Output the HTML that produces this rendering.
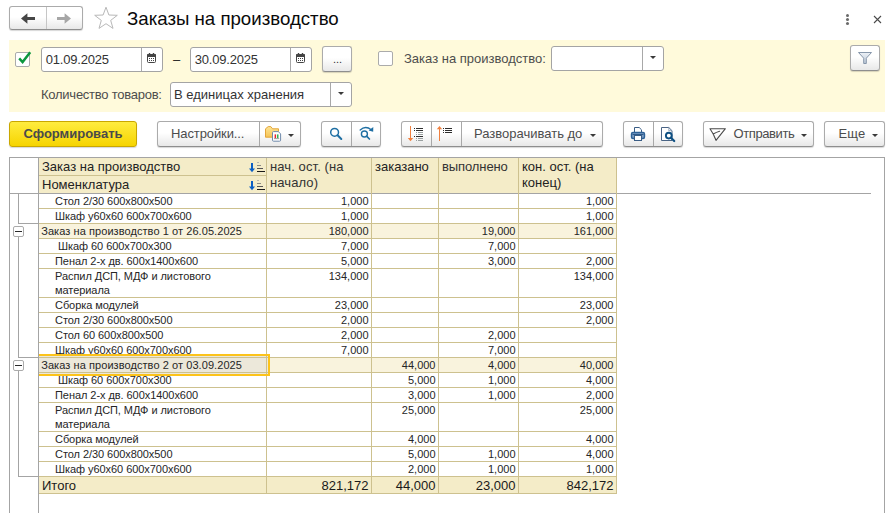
<!DOCTYPE html>
<html lang="ru"><head><meta charset="utf-8"><title>Заказы на производство</title>
<style>
*{box-sizing:border-box;margin:0;padding:0}
html,body{width:895px;height:513px;overflow:hidden;background:#fff}
body{font-family:"Liberation Sans",Arial,sans-serif;font-size:13px;color:#333;position:relative}
.abs{position:absolute}
.btn{position:absolute;height:25px;border:1px solid #ababab;border-bottom-color:#8e8e8e;border-radius:3px;background:linear-gradient(#ffffff 45%,#e8e8e8);box-shadow:0 1px 1px rgba(0,0,0,.16);font-size:13px;color:#4c4c4c;line-height:23px;white-space:nowrap}
.inp{position:absolute;height:25px;border:1px solid #a4a4a4;border-radius:3px;background:#fff;font-size:13px;color:#333;line-height:23px;white-space:nowrap}
.inp .sep{position:absolute;top:0;bottom:0;width:1px;background:#a8a8a8}
.cal{position:absolute;left:105px;top:5px}
.dt{letter-spacing:-0.2px}
.lbl{position:absolute;font-size:13px;color:#4d4d4d;white-space:nowrap;line-height:16px}
.tri{position:absolute;width:0;height:0;border-left:3px solid transparent;border-right:3px solid transparent;border-top:3px solid #3a3a3a}
.cb{position:absolute;width:15px;height:15px;border:1px solid #ababab;border-radius:2px;background:#fff}
/* table */
#tbl{position:absolute;left:0;top:0;width:895px;height:513px;pointer-events:none}
.r{position:absolute;left:39px;width:577px;overflow:visible}
.r .n{z-index:3;position:absolute;top:0;font-size:11px;line-height:14px;color:#262626;white-space:nowrap}
.r.i2 .n{line-height:14px}
.r.g .n{letter-spacing:0.07px}
.r.i .n,.r.i2 .n{letter-spacing:-0.06px}
.r .v{z-index:3;position:absolute;top:0;font-size:11px;line-height:14px;color:#262626;white-space:nowrap}
.r.t .n,.r.t .v{font-size:13px;line-height:16px;color:#1a1a1a;top:1px}
.hl{z-index:2;position:absolute;left:39px;width:578px;height:1px;background:#cdc18f}
.vl{z-index:2;position:absolute;width:1px;background:#cdc18f}
.gl{position:absolute;background:#a4a4a4}
</style></head><body>

<!-- title bar -->
<div class="btn" style="left:9px;top:6px;width:74px;height:24px"></div>
<div class="abs" style="left:46px;top:7px;width:1px;height:22px;background:#c6c6c6"></div>
<svg class="abs" style="left:9px;top:6px" width="74" height="24" viewBox="0 0 74 24">
 <path d="M12 12.5 L18.4 7.3 V11 H26 V14 H18.4 V17.7 Z" fill="#464646"/>
 <path d="M62 12.5 L55.6 7.3 V11 H48 V14 H55.6 V17.7 Z" fill="#a6a6a6"/>
</svg>
<svg class="abs" style="left:92.7px;top:5px" width="26" height="25" viewBox="0 0 26 25">
 <path d="M13 2.2 L15.9 10 L24.3 10.3 L17.7 15.4 L20 23.4 L13 18.7 L6 23.4 L8.3 15.4 L1.7 10.3 L10.1 10 Z" fill="#fff" stroke="#b8b8b8" stroke-width="1"/>
</svg>
<div class="abs" style="left:127px;top:7px;font-size:18.67px;line-height:24px;color:#0a0a0a;white-space:nowrap">Заказы на производство</div>
<!-- kebab + close -->
<div class="abs" style="left:846px;top:14px;width:3px;height:3px;border-radius:50%;background:#6a6a6a;box-shadow:0 4px 0 #6a6a6a,0 8px 0 #6a6a6a"></div>
<svg class="abs" style="left:873px;top:15px" width="9" height="9" viewBox="0 0 9 9"><path d="M1 1 L8 8 M8 1 L1 8" stroke="#4a4a4a" stroke-width="1.1" fill="none"/></svg>

<!-- yellow panel -->
<div class="abs" style="left:9px;top:40px;width:876px;height:72px;background:#fffadb"></div>
<div class="cb" style="left:15px;top:52px"></div>
<svg class="abs" style="left:16px;top:48.5px" width="18" height="16" viewBox="0 0 18 16"><path d="M3.2 9.3 L6.6 13 L14.2 3.3" stroke="#0c973e" stroke-width="2.5" fill="none"/></svg>
<div class="inp" style="left:41px;top:47px;width:122px"><span class="dt" style="position:absolute;left:3.7px">01.09.2025</span><span class="sep" style="left:99px"></span><svg class="cal" width="9" height="10" viewBox="0 0 9 10"><g shape-rendering="crispEdges">
  <rect x="0.5" y="1.5" width="8" height="8" rx="1" fill="#fff" stroke="#444" stroke-width="1" shape-rendering="auto"/>
  <rect x="0" y="1.2" width="9" height="2.8" fill="#444" shape-rendering="auto"/>
  <rect x="1.8" y="0" width="1.4" height="1.6" fill="#444" shape-rendering="auto"/><rect x="5.8" y="0" width="1.4" height="1.6" fill="#444" shape-rendering="auto"/>
  <rect x="2" y="5" width="1" height="1" fill="#444"/><rect x="4" y="5" width="1" height="1" fill="#444"/><rect x="6" y="5" width="1" height="1" fill="#444"/>
  <rect x="2" y="7" width="1" height="1" fill="#444"/><rect x="4" y="7" width="1" height="1" fill="#444"/><rect x="6" y="7" width="1" height="1" fill="#444"/>
 </g></svg></div>
<div class="lbl" style="left:173px;top:52px;color:#222">–</div>
<div class="inp" style="left:190px;top:47px;width:122px"><span class="dt" style="position:absolute;left:3.7px">30.09.2025</span><span class="sep" style="left:99px"></span><svg class="cal" width="9" height="10" viewBox="0 0 9 10"><g shape-rendering="crispEdges">
  <rect x="0.5" y="1.5" width="8" height="8" rx="1" fill="#fff" stroke="#444" stroke-width="1" shape-rendering="auto"/>
  <rect x="0" y="1.2" width="9" height="2.8" fill="#444" shape-rendering="auto"/>
  <rect x="1.8" y="0" width="1.4" height="1.6" fill="#444" shape-rendering="auto"/><rect x="5.8" y="0" width="1.4" height="1.6" fill="#444" shape-rendering="auto"/>
  <rect x="2" y="5" width="1" height="1" fill="#444"/><rect x="4" y="5" width="1" height="1" fill="#444"/><rect x="6" y="5" width="1" height="1" fill="#444"/>
  <rect x="2" y="7" width="1" height="1" fill="#444"/><rect x="4" y="7" width="1" height="1" fill="#444"/><rect x="6" y="7" width="1" height="1" fill="#444"/>
 </g></svg></div>
<div class="btn" style="left:322px;top:46px;width:30px;height:26px;text-align:center;color:#333;font-size:11px;line-height:24px;padding-left:1px">...</div>
<div class="cb" style="left:378px;top:51px"></div>
<div class="lbl" style="left:404px;top:51px">Заказ на производство:</div>
<div class="inp" style="left:551px;top:46px;width:113px"><span class="sep" style="left:90px"></span></div>
<div class="tri" style="left:650px;top:56px"></div>
<div class="btn" style="left:850px;top:45px;width:30px;height:26px"></div>
<svg class="abs" style="left:857px;top:51px" width="16" height="14" viewBox="0 0 16 14">
 <defs><linearGradient id="fg" x1="0" y1="0" x2="0" y2="1"><stop offset="0" stop-color="#eef2f7"/><stop offset="1" stop-color="#b9c6d6"/></linearGradient></defs>
 <path d="M1.5 1.5 H14.5 L9.3 7.2 V12.5 H6.7 V7.2 Z" fill="url(#fg)" stroke="#8797ab" stroke-width="1" stroke-linejoin="round"/>
</svg>
<div class="lbl" style="left:41px;top:87px;letter-spacing:-0.25px">Количество товаров:</div>
<div class="inp" style="left:170px;top:82px;width:182px"><span style="position:absolute;left:3px">В единицах хранения</span><span class="sep" style="left:159px"></span></div>
<div class="tri" style="left:338px;top:92px"></div>

<!-- toolbar -->
<div class="btn" style="left:9px;top:121px;width:128px;height:26px;background:linear-gradient(#ffec3f,#f6d400);border-color:#c9a700;font-weight:bold;color:#4a4a4a;text-align:center;line-height:24px">Сформировать</div>
<div class="btn" style="left:157px;top:121px;width:144px;height:26px"></div>
<div class="lbl" style="left:171px;top:126px;color:#4c4c4c;letter-spacing:-0.1px">Настройки...</div>
<div class="abs" style="left:259px;top:122px;width:1px;height:24px;background:#a8a8a8"></div>
<svg class="abs" style="left:264px;top:125px" width="19" height="18" viewBox="0 0 19 18">
 <defs><linearGradient id="fo" x1="0" y1="0" x2="0" y2="1"><stop offset="0" stop-color="#fde596"/><stop offset="1" stop-color="#f6c455"/></linearGradient></defs>
 <path d="M1.5 12.2 V3.8 L4.2 1.6 H6.8 L8.6 3.8 H14.5 V12.2 Z" fill="url(#fo)" stroke="#e3a53a" stroke-width="1" stroke-linejoin="round"/>
 <path d="M8.5 7.6 Q8.5 6.6 9.5 6.6 H14.3 L16.6 8.9 V15.2 Q16.6 16.2 15.6 16.2 H9.5 Q8.5 16.2 8.5 15.2 Z" fill="#fff" stroke="#6f89aa" stroke-width="1"/>
 <rect x="10.6" y="9.4" width="1.5" height="3.8" fill="#e8252b"/>
 <rect x="13" y="9.4" width="1.5" height="3.8" fill="#2fb457"/>
 <rect x="10" y="13.3" width="5.2" height="0.8" fill="#8a8a8a"/>
</svg>
<div class="tri" style="left:288px;top:134px"></div>
<div class="btn" style="left:321px;top:121px;width:60px;height:26px"></div>
<div class="abs" style="left:351px;top:122px;width:1px;height:24px;background:#a8a8a8"></div>
<svg class="abs" style="left:321px;top:121px" width="60" height="26" viewBox="0 0 60 26">
 <g fill="none" stroke="#1f6fa3" stroke-linecap="round">
  <circle cx="13.6" cy="11.3" r="3.9" stroke-width="1.5"/>
  <path d="M16.6 14.3 L20.3 18" stroke-width="2"/>
  <circle cx="43.4" cy="13" r="3" stroke-width="1.4"/>
  <path d="M45.6 15.2 L48.4 18" stroke-width="1.7"/>
  <path d="M39.2 9 Q44.5 4.2 50.2 8.8" stroke-width="1.4"/>
 </g>
 <path d="M52.3 6 L52.2 10.8 L47.6 9.6 Z" fill="#1f6fa3"/>
</svg>
<div class="btn" style="left:401px;top:121px;width:202px;height:26px"></div>
<div class="abs" style="left:431px;top:122px;width:1px;height:24px;background:#a8a8a8"></div>
<div class="abs" style="left:461px;top:122px;width:1px;height:24px;background:#a8a8a8"></div>
<svg class="abs" style="left:401px;top:121px" width="60" height="26" viewBox="0 0 60 26" shape-rendering="crispEdges">
 <g fill="#f0803f">
  <rect x="9" y="5" width="1" height="13"/><path d="M6.8 17 H12.2 L9.5 20.2 Z" shape-rendering="auto"/>
  <rect x="38" y="7" width="1" height="13"/><path d="M35.8 8.2 H41.2 L38.5 5 Z" shape-rendering="auto"/>
 </g>
 <g fill="#2e2e2e">
  <rect x="13" y="7" width="1" height="1"/><rect x="15" y="7" width="7" height="1"/>
  <rect x="13" y="9" width="1" height="1"/><rect x="15" y="9" width="7" height="1"/>
  <rect x="13" y="15" width="1" height="1"/><rect x="15" y="15" width="7" height="1"/>
  <rect x="42" y="7" width="1" height="1"/><rect x="44" y="7" width="7" height="1"/>
  <rect x="42" y="9" width="1" height="1"/><rect x="44" y="9" width="7" height="1"/>
  <rect x="42" y="11" width="1" height="1"/><rect x="44" y="11" width="7" height="1"/>
 </g>
 <g fill="#9aa0a0">
  <rect x="15" y="11" width="1" height="1"/><rect x="17" y="11" width="5" height="1"/>
  <rect x="15" y="13" width="1" height="1"/><rect x="17" y="13" width="5" height="1"/>
  <rect x="15" y="17" width="1" height="1"/><rect x="17" y="17" width="5" height="1"/>
  <rect x="15" y="19" width="1" height="1"/><rect x="17" y="19" width="5" height="1"/>
 </g>
</svg>
<div class="lbl" style="left:474px;top:126px;color:#4c4c4c">Разворачивать до</div>
<div class="tri" style="left:590px;top:134px"></div>
<div class="btn" style="left:623px;top:121px;width:60px;height:26px"></div>
<div class="abs" style="left:653px;top:122px;width:1px;height:24px;background:#a8a8a8"></div>
<svg class="abs" style="left:623px;top:121px" width="60" height="26" viewBox="0 0 60 26">
 <path d="M11.5 11 V6.5 H16.2 L18.5 8.8 V11" fill="#fff" stroke="#3a5d85" stroke-width="1"/>
 <rect x="8.5" y="11.5" width="13" height="6" rx="1.5" fill="#7a9cc4" stroke="#2d6196" stroke-width="1.4"/>
 <rect x="9.5" y="13" width="11" height="1" fill="#2d5a8a"/>
 <rect x="11.5" y="14.5" width="7" height="5" fill="#fff" stroke="#3a5d85" stroke-width="1"/>
 <path d="M38.5 6.5 H45.8 L49 9.7 V19.5 H38.5 Z" fill="#fff" stroke="#4a6485" stroke-width="1"/>
 <path d="M45.8 6.5 V9.7 H49" fill="none" stroke="#7d93ad" stroke-width="0.8"/>
 <circle cx="45.8" cy="14.6" r="2.9" fill="#fff" stroke="#0d4f82" stroke-width="1.9"/>
 <path d="M48 16.8 L51.2 20" stroke="#0d4f82" stroke-width="2.2" stroke-linecap="round"/>
</svg>
<div class="btn" style="left:703px;top:121px;width:111px;height:26px"></div>
<svg class="abs" style="left:708px;top:126px" width="20" height="17" viewBox="0 0 20 17">
 <path d="M2 2.7 H17.4 L8 14.3 L5.2 8 Z M5.2 8 Q8.5 6 11.6 5.2" fill="none" stroke="#4a4a4a" stroke-width="1.1" stroke-linejoin="round" stroke-linecap="round"/>
</svg>
<div class="lbl" style="left:733.5px;top:126px;color:#4c4c4c;letter-spacing:-0.4px">Отправить</div>
<div class="tri" style="left:801px;top:134px"></div>
<div class="btn" style="left:824px;top:121px;width:61px;height:26px"></div>
<div class="lbl" style="left:838.5px;top:126px;color:#4c4c4c;letter-spacing:0.2px">Еще</div>
<div class="tri" style="left:872px;top:134px"></div>

<!-- table -->
<div id="tbl">
 <!-- outer grey borders -->
 <div class="gl" style="left:9px;top:157px;width:876px;height:1px"></div>
 <div class="gl" style="left:9px;top:157px;width:1px;height:356px"></div>
 <div class="gl" style="left:884px;top:157px;width:1px;height:356px"></div>
 <div class="gl" style="left:38px;top:157px;width:1px;height:356px"></div>
 <div class="gl" style="left:10px;top:193px;width:861px;height:1px"></div>
 <!-- header -->
 <div class="abs" style="left:39px;top:158px;width:577px;height:35px;background:#f4ecc8"></div>
 <div class="hl" style="top:175px;width:227px"></div>
<svg class="abs" style="left:248px;top:161px" width="18" height="12" viewBox="0 0 18 12" shape-rendering="crispEdges">
  <rect x="3" y="2" width="2" height="7" fill="#0b5fc4"/><path d="M1 7.4 H7 L4 11.2 Z" fill="#0b5fc4" shape-rendering="auto"/>
  <rect x="9" y="1" width="2" height="1" fill="#b8b8b0"/><rect x="9" y="4" width="4" height="1" fill="#8c8c86"/><rect x="9" y="7" width="6" height="1" fill="#555"/><rect x="9" y="10" width="8" height="1" fill="#1a1a1a"/>
 </svg>
<svg class="abs" style="left:248px;top:179px" width="18" height="12" viewBox="0 0 18 12" shape-rendering="crispEdges">
  <rect x="3" y="2" width="2" height="7" fill="#0b5fc4"/><path d="M1 7.4 H7 L4 11.2 Z" fill="#0b5fc4" shape-rendering="auto"/>
  <rect x="9" y="1" width="2" height="1" fill="#b8b8b0"/><rect x="9" y="4" width="4" height="1" fill="#8c8c86"/><rect x="9" y="7" width="6" height="1" fill="#555"/><rect x="9" y="10" width="8" height="1" fill="#1a1a1a"/>
 </svg>
 <div class="lbl" style="left:42px;top:159px;color:#222">Заказ на производство</div>
 <div class="lbl" style="left:42px;top:177px;color:#222">Номенклатура</div>
 <div class="lbl" style="left:270px;top:159px;color:#333;letter-spacing:0.1px">нач. ост. (на<br>начало)</div>
 <div class="lbl" style="left:375px;top:159px;color:#222">заказано</div>
 <div class="lbl" style="left:442px;top:159px;color:#333;letter-spacing:-0.1px">выполнено</div>
 <div class="lbl" style="left:522px;top:159px;color:#222">кон. ост. (на<br>конец)</div>
 <div class="abs" style="left:39px;top:356px;width:229px;height:18px;background:#ece8da;z-index:1"></div>
<div class="r i" style="top:194px;height:14px;background:#fff">
<span class="n" style="left:16px">Стол 2/30 600х800х500</span>
<span class="v" style="right:247.5px">1,000</span>
<span class="v" style="right:2.5px">1,000</span>
</div>
<div class="hl" style="top:208px"></div>
<div class="r i" style="top:209px;height:14px;background:#fff">
<span class="n" style="left:16px">Шкаф у60х60 600х700х600</span>
<span class="v" style="right:247.5px">1,000</span>
<span class="v" style="right:2.5px">1,000</span>
</div>
<div class="hl" style="top:223px"></div>
<div class="r g" style="top:224px;height:14px;background:#f9f3dd">
<span class="n" style="left:2.200000000000003px">Заказ на производство 1 от 26.05.2025</span>
<span class="v" style="right:247.5px">180,000</span>
<span class="v" style="right:100.5px">19,000</span>
<span class="v" style="right:2.5px">161,000</span>
</div>
<div class="hl" style="top:238px"></div>
<div class="r i" style="top:239px;height:14px;background:#fff">
<span class="n" style="left:19px">Шкаф 60 600х700х300</span>
<span class="v" style="right:247.5px">7,000</span>
<span class="v" style="right:100.5px">7,000</span>
</div>
<div class="hl" style="top:253px"></div>
<div class="r i" style="top:254px;height:14px;background:#fff">
<span class="n" style="left:16px">Пенал 2-х дв. 600х1400х600</span>
<span class="v" style="right:247.5px">5,000</span>
<span class="v" style="right:100.5px">3,000</span>
<span class="v" style="right:2.5px">2,000</span>
</div>
<div class="hl" style="top:268px"></div>
<div class="r i2" style="top:269px;height:28px;background:#fff">
<span class="n" style="left:16px">Распил ДСП, МДФ и листового<br>материала</span>
<span class="v" style="right:247.5px">134,000</span>
<span class="v" style="right:2.5px">134,000</span>
</div>
<div class="hl" style="top:297px"></div>
<div class="r i" style="top:298px;height:14px;background:#fff">
<span class="n" style="left:16px">Сборка модулей</span>
<span class="v" style="right:247.5px">23,000</span>
<span class="v" style="right:2.5px">23,000</span>
</div>
<div class="hl" style="top:312px"></div>
<div class="r i" style="top:313px;height:14px;background:#fff">
<span class="n" style="left:16px">Стол 2/30 600х800х500</span>
<span class="v" style="right:247.5px">2,000</span>
<span class="v" style="right:2.5px">2,000</span>
</div>
<div class="hl" style="top:327px"></div>
<div class="r i" style="top:328px;height:14px;background:#fff">
<span class="n" style="left:16px">Стол 60 600х800х500</span>
<span class="v" style="right:247.5px">2,000</span>
<span class="v" style="right:100.5px">2,000</span>
</div>
<div class="hl" style="top:342px"></div>
<div class="r i" style="top:343px;height:14px;background:#fff">
<span class="n" style="left:16px">Шкаф у60х60 600х700х600</span>
<span class="v" style="right:247.5px">7,000</span>
<span class="v" style="right:100.5px">7,000</span>
</div>
<div class="hl" style="top:357px"></div>
<div class="r g" style="top:358px;height:14px;background:#f9f3dd">
<span class="n" style="left:2.200000000000003px">Заказ на производство 2 от 03.09.2025</span>
<span class="v" style="right:180.5px">44,000</span>
<span class="v" style="right:100.5px">4,000</span>
<span class="v" style="right:2.5px">40,000</span>
</div>
<div class="hl" style="top:372px"></div>
<div class="r i" style="top:373px;height:14px;background:#fff">
<span class="n" style="left:19px">Шкаф 60 600х700х300</span>
<span class="v" style="right:180.5px">5,000</span>
<span class="v" style="right:100.5px">1,000</span>
<span class="v" style="right:2.5px">4,000</span>
</div>
<div class="hl" style="top:387px"></div>
<div class="r i" style="top:388px;height:14px;background:#fff">
<span class="n" style="left:16px">Пенал 2-х дв. 600х1400х600</span>
<span class="v" style="right:180.5px">3,000</span>
<span class="v" style="right:100.5px">1,000</span>
<span class="v" style="right:2.5px">2,000</span>
</div>
<div class="hl" style="top:402px"></div>
<div class="r i2" style="top:403px;height:28px;background:#fff">
<span class="n" style="left:16px">Распил ДСП, МДФ и листового<br>материала</span>
<span class="v" style="right:180.5px">25,000</span>
<span class="v" style="right:2.5px">25,000</span>
</div>
<div class="hl" style="top:431px"></div>
<div class="r i" style="top:432px;height:14px;background:#fff">
<span class="n" style="left:16px">Сборка модулей</span>
<span class="v" style="right:180.5px">4,000</span>
<span class="v" style="right:2.5px">4,000</span>
</div>
<div class="hl" style="top:446px"></div>
<div class="r i" style="top:447px;height:14px;background:#fff">
<span class="n" style="left:16px">Стол 2/30 600х800х500</span>
<span class="v" style="right:180.5px">5,000</span>
<span class="v" style="right:100.5px">1,000</span>
<span class="v" style="right:2.5px">4,000</span>
</div>
<div class="hl" style="top:461px"></div>
<div class="r i" style="top:462px;height:14px;background:#fff">
<span class="n" style="left:16px">Шкаф у60х60 600х700х600</span>
<span class="v" style="right:180.5px">2,000</span>
<span class="v" style="right:100.5px">1,000</span>
<span class="v" style="right:2.5px">1,000</span>
</div>
<div class="hl" style="top:476px"></div>
<div class="r t" style="top:477px;height:16px;background:#f4ecc8">
<span class="n" style="left:3px">Итого</span>
<span class="v" style="right:247.5px">821,172</span>
<span class="v" style="right:180.5px">44,000</span>
<span class="v" style="right:100.5px">23,000</span>
<span class="v" style="right:2.5px">842,172</span>
</div>
<div class="hl" style="top:493px"></div>
 <div class="abs" style="left:39px;top:354px;width:231px;height:22px;border:2px solid #fcc31a;border-left:none;z-index:5"></div>

 <!-- vertical column lines -->
 <div class="vl" style="left:266px;top:158px;height:336px"></div>
 <div class="vl" style="left:371px;top:158px;height:336px"></div>
 <div class="vl" style="left:438px;top:158px;height:336px"></div>
 <div class="vl" style="left:518px;top:158px;height:336px"></div>
 <div class="vl" style="left:616px;top:158px;height:336px"></div>
 <!-- tree lines -->
 <div class="gl" style="left:18px;top:194px;width:1px;height:30px"></div>
 <div class="gl" style="left:18px;top:223px;width:20px;height:1px"></div>
 <div class="gl" style="left:18px;top:237px;width:1px;height:121px"></div>
 <div class="gl" style="left:18px;top:357px;width:20px;height:1px"></div>
 <div class="gl" style="left:18px;top:371px;width:1px;height:106px"></div>
 <div class="gl" style="left:18px;top:476px;width:20px;height:1px"></div>
 <div class="abs" style="left:13px;top:226px;width:11px;height:11px;border:1px solid #ababab;border-radius:2px;background:#fff"></div>
 <div class="abs" style="left:15px;top:230.7px;width:7px;height:1.6px;background:#2a2a2a"></div>
 <div class="abs" style="left:13px;top:360px;width:11px;height:11px;border:1px solid #ababab;border-radius:2px;background:#fff"></div>
 <div class="abs" style="left:15px;top:364.7px;width:7px;height:1.6px;background:#2a2a2a"></div>
 <!-- selection -->
</div>
</body></html>
